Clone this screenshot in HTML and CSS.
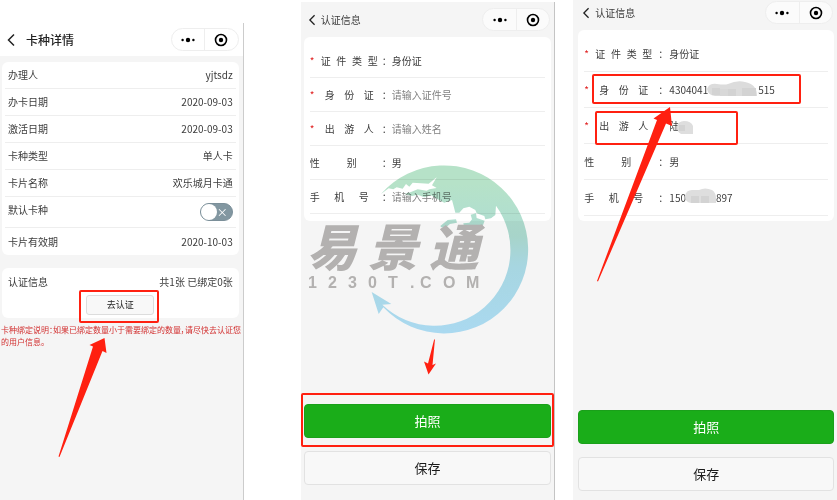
FILE: index.html
```html
<!DOCTYPE html>
<html lang="zh-CN">
<head>
<meta charset="UTF-8">
<meta name="viewport" content="width=device-width, initial-scale=1.0">
<title>卡种认证</title>
<link rel="stylesheet" href="styles.css">
</head>
<body>
<main class="screens">

    <section class="phone phone-detail">
        <header class="navbar navbar-white">
            <button class="back" aria-label="返回"><svg width="8" height="14" viewBox="0 0 8 14"><path d="M7 1.5L1.5 7L7 12.5"/></svg></button>
            <h1>卡种详情</h1>
            <div class="capsule">
                <button aria-label="更多"><svg width="14" height="6" viewBox="0 0 14 6"><circle cx="1.6" cy="3" r="1.2"/><circle cx="7" cy="3" r="2.2"/><circle cx="12.4" cy="3" r="1.2"/></svg></button>
                <button aria-label="关闭"><svg width="14" height="14" viewBox="0 0 14 14"><circle class="ring" cx="7" cy="7" r="5.5"/><circle cx="7" cy="7" r="2.2"/></svg></button>
            </div>
        </header>
        <dl class="card info">
            <div class="line"><dt>办理人</dt><dd>yjtsdz</dd></div>
            <div class="line"><dt>办卡日期</dt><dd>2020-09-03</dd></div>
            <div class="line"><dt>激活日期</dt><dd>2020-09-03</dd></div>
            <div class="line"><dt>卡种类型</dt><dd>单人卡</dd></div>
            <div class="line"><dt>卡片名称</dt><dd>欢乐城月卡通</dd></div>
            <div class="line line-switch">
                <dt><label for="defaultCard">默认卡种</label></dt>
                <dd><input type="checkbox" class="switch" id="defaultCard"></dd>
            </div>
            <div class="line"><dt>卡片有效期</dt><dd>2020-10-03</dd></div>
        </dl>
        <div class="card auth">
            <div class="line"><span>认证信息</span><span>共1张 已绑定0张</span></div>
            <div class="auth-action marked">
                <button class="btn-auth">去认证</button>
            </div>
        </div>
        <p class="notice">卡种绑定说明：如果已绑定数量小于需要绑定的数量，请尽快去认证您的用户信息。</p>
        <svg class="arrow arrow-detail" width="60" height="120" viewBox="0 0 60 120"><path d="M8.5 118.5L43 8.5L39.5 7L54.5 0L56.5 15L52.5 13L9.5 119Z"/></svg>
    </section>

    <section class="phone phone-empty">
        <header class="navbar">
            <button class="back" aria-label="返回"><svg width="8" height="12" viewBox="0 0 8 14"><path d="M7 1.5L1.5 7L7 12.5"/></svg></button>
            <h1>认证信息</h1>
            <div class="capsule">
                <button aria-label="更多"><svg width="14" height="6" viewBox="0 0 14 6"><circle cx="1.6" cy="3" r="1.2"/><circle cx="7" cy="3" r="2.2"/><circle cx="12.4" cy="3" r="1.2"/></svg></button>
                <button aria-label="关闭"><svg width="14" height="14" viewBox="0 0 14 14"><circle class="ring" cx="7" cy="7" r="5.5"/><circle cx="7" cy="7" r="2.2"/></svg></button>
            </div>
        </header>
        <form class="form">
            <div class="card fields">
                <div class="field required"><span class="name name-4">证件类型</span><span class="colon">：</span><span class="text">身份证</span></div>
                <div class="field required"><label class="name name-3" for="idNo">身份证</label><span class="colon">：</span><input type="text" id="idNo" placeholder="请输入证件号"></div>
                <div class="field required"><label class="name name-3" for="visitor">出游人</label><span class="colon">：</span><input type="text" id="visitor" placeholder="请输入姓名"></div>
                <div class="field"><span class="name name-2">性别</span><span class="colon">：</span><span class="text">男</span></div>
                <div class="field"><label class="name name-phone" for="mobile">手机号</label><span class="colon">：</span><input type="tel" id="mobile" placeholder="请输入手机号"></div>
            </div>
            <div class="actions">
                <div class="photo marked"><button type="button" class="btn btn-green">拍照</button></div>
                <button type="button" class="btn btn-plain">保存</button>
            </div>
        </form>
        <svg class="watermark" width="254" height="190" viewBox="0 0 254 190">
            <defs>
                <linearGradient id="globe" gradientUnits="userSpaceOnUse" x1="0" y1="50" x2="0" y2="550">
                    <stop offset="0.1" stop-color="#b6e2c8"/>
                    <stop offset="0.42" stop-color="#aeddd3"/>
                    <stop offset="0.6" stop-color="#aedfeb"/>
                    <stop offset="1" stop-color="#b1e2fa"/>
                </linearGradient>
            </defs>
            <g fill="url(#globe)" transform="translate(-5 0) scale(0.33333)">
                <path d="M255 132A252 252 0 1 1 262 472L248 492L227 426L286 462L259 464A227 227 0 0 0 600 167L598 195L585 205L568 208L565 198L542 190L538 180L520 170L502 175L490 188L478 188L472 165L468 150L445 158L425 148L405 136L385 142L365 134L348 138L325 132L345 126L365 118L392 122L400 118L422 114L408 106L422 82L398 101L375 100L350 98L340 110L330 102L320 116L302 112L292 118L278 115Z"/>
                <path d="M433 228L455 210L480 208L483 218L462 222L448 233L436 232Z"/>
                <path d="M502 220L520 218L528 208L524 194L540 190L542 204L566 212L560 228L540 226L520 234L504 230Z"/>
            </g>
            <g class="brand">
                <text class="brand-name" y="116" x="6 67 128">易景通</text>
                <text class="brand-site" y="138" x="7 27 47 67 87 109 119 142 165">1230T.COM</text>
            </g>
        </svg>
        <svg class="arrow arrow-photo" width="14" height="36" viewBox="0 0 14 36"><path d="M12 0L9.5 26L13 24.5L5.5 35.5L1 22.5L5 24.5L11 1Z"/></svg>
    </section>

    <section class="phone phone-filled">
        <header class="navbar">
            <button class="back" aria-label="返回"><svg width="8" height="12" viewBox="0 0 8 14"><path d="M7 1.5L1.5 7L7 12.5"/></svg></button>
            <h1>认证信息</h1>
            <div class="capsule">
                <button aria-label="更多"><svg width="14" height="6" viewBox="0 0 14 6"><circle cx="1.6" cy="3" r="1.2"/><circle cx="7" cy="3" r="2.2"/><circle cx="12.4" cy="3" r="1.2"/></svg></button>
                <button aria-label="关闭"><svg width="14" height="14" viewBox="0 0 14 14"><circle class="ring" cx="7" cy="7" r="5.5"/><circle cx="7" cy="7" r="2.2"/></svg></button>
            </div>
        </header>
        <form class="form">
            <div class="card fields">
                <div class="field required"><span class="name name-4">证件类型</span><span class="colon">：</span><span class="text">身份证</span></div>
                <div class="field required marked marked-id">
                    <label class="name name-3" for="idNo2">身份证</label><span class="colon">：</span><input type="text" id="idNo2" value="4304041&ensp;&ensp;&ensp;&ensp;&ensp;&ensp;&ensp;&ensp;&ensp;&ensp;515">
                    <svg class="mosaic mosaic-id" width="50" height="17" viewBox="0 0 50 17"><path fill="#dcdcdc" d="M0 8Q2 2 10 3Q18 4 21 3Q30-1 38 1Q50 3 50 15H8Q1 14 0 8Z"/><path fill="#d3d3d3" d="M5 7h8v7H5zM21 8h8v7h-8zM35 7h14v8H35z"/><path fill="#d8d8d8" d="M13 8h8v7h-8z"/></svg>
                </div>
                <div class="field required marked marked-visitor">
                    <label class="name name-3" for="visitor2">出游人</label><span class="colon">：</span><input type="text" id="visitor2" value="陆">
                    <svg class="mosaic mosaic-visitor" width="17" height="15" viewBox="0 0 17 15"><path fill="#dedede" d="M0 7Q1 1 7 1Q14 1 16 6V14H4Q0 12 0 7Z"/><path fill="#d3d3d3" d="M2 5h6v6H2z"/></svg>
                </div>
                <div class="field"><span class="name name-2">性别</span><span class="colon">：</span><span class="text">男</span></div>
                <div class="field">
                    <label class="name name-phone" for="mobile2">手机号</label><span class="colon">：</span><input type="tel" id="mobile2" value="150&ensp;&ensp;&ensp;&ensp;&ensp;&ensp;897">
                    <svg class="mosaic mosaic-mobile" width="32" height="17" viewBox="0 0 32 17"><path fill="#dedede" d="M0 8Q1 2 7 2H14Q20-1 27 2Q32 5 31 15H6Q0 14 0 8Z"/><path fill="#d3d3d3" d="M6 8h8v7H6zM16 8h8v7h-8z"/></svg>
                </div>
            </div>
            <div class="actions">
                <div class="photo"><button type="button" class="btn btn-green">拍照</button></div>
                <button type="button" class="btn btn-plain">保存</button>
            </div>
        </form>
        <svg class="arrow arrow-id" width="80" height="176" viewBox="0 0 80 176"><path d="M4 174L64 13L60.5 11.5L77 0L79 19L73 16.5L5 174.5Z"/></svg>
    </section>

</main>
</body>
</html>
```
FILE: styles.css
```css
* {
    box-sizing: border-box;
}
body {
    margin: 0;
    background-color: #fff;
    color: #3c3c3c;
    font-family: "Noto Sans CJK SC", sans-serif;
    font-size: 10px;
    line-height: 16px;
}
h1, p, dl, dd {
    margin: 0;
}
button, input {
    font: inherit;
    color: inherit;
}
.screens {
    display: flex;
    min-height: 100vh;
    overflow: hidden;
}

/* phones */
.phone {
    position: relative;
    display: flex;
    flex-direction: column;
    flex: 254 1 0;
    min-width: 0;
    background-color: #f5f5f5;
}
.phone-detail {
    flex-grow: 243;
    margin-top: 23px;
    margin-right: 57px;
    border-right: 1px solid #ccc;
}
.phone-empty {
    margin-top: 2px;
    margin-right: 18px;
    border-right: 1px solid #c4c4c4;
}
.phone-filled {
    flex-grow: 264;
}

/* top bar */
.navbar {
    display: flex;
    align-items: center;
    height: 35px;
    padding: 0 4px 0 5px;
}
.navbar-white {
    height: 33px;
    background-color: #fff;
}
.navbar h1 {
    font-size: 10px;
    font-weight: 400;
}
.navbar-white h1 {
    padding-left: 6px;
    font-size: 12px;
    font-weight: 500;
    color: #222;
}
.phone-filled .navbar {
    height: 30px;
    padding-bottom: 5px;
    padding-left: 7px;
}
.back {
    display: flex;
    width: 15px;
    padding: 0 2px;
    border: 0;
    background: none;
}
.back path {
    fill: none;
    stroke: #222;
    stroke-width: 1.5;
}
.capsule {
    display: flex;
    width: 68px;
    height: 23px;
    margin-left: auto;
    border: 1px solid #eee;
    border-radius: 12px;
    background-color: #fbfbfb;
}
.navbar-white .capsule {
    background-color: #fff;
}
.capsule button {
    display: flex;
    flex: 1;
    align-items: center;
    justify-content: center;
    padding: 0;
    border: 0;
    background: none;
}
.capsule button + button {
    border-left: 1px solid #eee;
}
.capsule .ring {
    fill: none;
    stroke: #000;
    stroke-width: 1.6;
}

.card {
    margin: 0 4px 0 2px;
    border-radius: 6px;
    background-color: #fff;
}

/* card detail */
.info {
    margin-top: 6px;
    padding: 0 3px;
}
.line {
    display: flex;
    align-items: center;
    justify-content: space-between;
    height: 27px;
    padding: 0 3px;
    border-bottom: 1px solid #eee;
}
.line-switch {
    height: 31px;
}
.line-switch dt {
    padding-bottom: 4px;
}
.line-switch dd {
    display: flex;
}
.line:last-child {
    border-bottom: 0;
}
.switch {
    position: relative;
    width: 33px;
    height: 18px;
    margin: 0;
    appearance: none;
    border: 1px solid #7b8f99;
    border-radius: 9px;
    background-color: #8297a1;
}
.switch::before {
    content: "";
    display: block;
    width: 16px;
    height: 16px;
    border-radius: 50%;
    background-color: #fff;
}
.switch::after {
    content: "×";
    position: absolute;
    top: 0;
    right: 4px;
    font-size: 11px;
    color: #fff;
}
.auth {
    height: 50px;
    margin-top: 13px;
    padding: 0 3px;
}
.auth .line {
    border-bottom: 0;
}
.auth-action {
    width: 68px;
    margin: 0 auto;
}
.btn-auth {
    display: block;
    width: 100%;
    height: 20px;
    padding: 0;
    border: 1px solid #ddd;
    border-radius: 3px;
    background-color: #f8f8f8;
    font-size: 9px;
    line-height: 16px;
    color: #222;
}
.notice {
    margin-top: 6px;
    padding-left: 1px;
    font-size: 8px;
    line-height: 12px;
    font-feature-settings: "palt";
    color: #d22f2f;
}

/* certification form */
.form {
    display: flex;
    flex-direction: column;
    flex: 1;
}
.fields {
    margin-right: 3px;
    margin-left: 3px;
    padding: 7px 6px;
}
.field {
    position: relative;
    display: flex;
    align-items: center;
    height: 34px;
    border-bottom: 1px solid #eee;
}
.phone-filled .fields {
    margin-left: 5px;
    padding: 6px 6px 5px;
}
.phone-filled .field {
    height: 36px;
}
.required::before {
    content: "*";
    width: 11px;
    margin-right: -11px;
    color: #e02020;
}
.name {
    text-align-last: justify;
}
.name-4 {
    width: 57px;
    margin-left: 11px;
}
.name-3 {
    width: 49px;
    margin: 0 4px 0 15px;
}
.name-2 {
    width: 47px;
    margin-right: 21px;
}
.name-phone {
    width: 59px;
    margin-right: 9px;
}
.colon {
    width: 14px;
    padding-left: 4px;
}
.phone-filled .colon {
    width: 17px;
    padding-left: 6px;
}
.field input {
    flex: 1;
    min-width: 0;
    padding: 0;
    border: 0;
    outline: 0;
    background: none;
}
.field input::placeholder {
    color: #808080;
    opacity: 1;
}
.mosaic {
    position: absolute;
}
.mosaic-id {
    top: 9px;
    left: 123px;
}
.mosaic-visitor {
    top: 12px;
    left: 93px;
}
.mosaic-mobile {
    top: 8px;
    left: 101px;
}

.actions {
    margin-top: auto;
    padding: 0 3px 15px;
}
.phone-filled .actions {
    padding: 0 3px 9px 5px;
}
.photo {
    margin-bottom: 13px;
}
.btn {
    display: block;
    width: 100%;
    height: 34px;
    padding: 0;
    border-radius: 4px;
    font-size: 13px;
}
.btn-green {
    border: 1px solid #1aa01a;
    background-color: #1aad19;
    color: #fff;
}
.btn-plain {
    border: 1px solid #e2e2e2;
    background-color: #f8f8f8;
    color: #1a1a1a;
}

/* red marks */
.marked {
    position: relative;
}
.marked::after {
    content: "";
    position: absolute;
    border: 2px solid #ff2010;
    border-radius: 2px;
    pointer-events: none;
}
.auth-action::after {
    inset: -5px -5px -8px -7px;
}
.photo::after {
    inset: -11px -3px -9px;
}
.marked-id::after {
    inset: 2px 27px 3px 8px;
}
.marked-visitor::after {
    inset: 3px 90px -2px 11px;
}
.arrow {
    position: absolute;
    fill: #ff2010;
    pointer-events: none;
}
.arrow-detail {
    top: 315px;
    left: 50px;
}
.arrow-photo {
    top: 337px;
    left: 122px;
}
.arrow-id {
    top: 107px;
    left: 20px;
}

/* logo over the form */
.watermark {
    position: absolute;
    top: 148px;
    left: 0;
    mix-blend-mode: multiply;
    pointer-events: none;
}
.brand {
    fill: #bab8b7;
}
.brand-name {
    font-size: 50px;
    font-style: italic;
    font-weight: 900;
}
.brand-site {
    font-family: "Liberation Sans", sans-serif;
    font-size: 16px;
    font-weight: 700;
}
```
